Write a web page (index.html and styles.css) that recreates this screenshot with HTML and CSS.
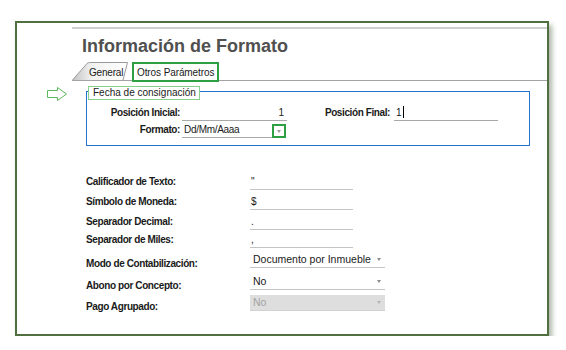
FILE: index.html
```html
<!DOCTYPE html>
<html lang="es">
<head>
<meta charset="utf-8">
<title>Información de Formato</title>
<link rel="stylesheet" href="styles.css">
</head>
<body>
<div class="frame">
  <svg class="arrow" width="21" height="15" viewBox="0 0 21 15"><polygon points="0.5,3.5 10.5,3.5 10.5,0.5 19.5,7 10.5,13.5 10.5,10.5 0.5,10.5" fill="#fff" stroke="#5cba5e" stroke-width="1"/></svg>
  <div class="page">
    <h1 class="title">Información de Formato</h1>
    <div class="tabs">
      <div class="tab tab-general">
        <svg class="tab-shape" width="57" height="18" viewBox="0 0 57 18"><defs><linearGradient id="tg" x1="0" y1="0" x2="1" y2="0"><stop offset="0" stop-color="#c4c4c4"/><stop offset="0.35" stop-color="#f2f2f2"/><stop offset="1" stop-color="#ffffff"/></linearGradient></defs><path d="M0.5 18 L15 1.5 Q16 0.5 17.5 0.5 L55.5 0.5 L51 18" fill="url(#tg)" stroke="#9a9a9a" stroke-width="1"/></svg>
        <span class="tab-text">General</span>
      </div>
      <div class="tab tab-active">Otros Parámetros</div>
    </div>

    <div class="fieldset">
      <div class="legend">Fecha de consignación</div>
      <div class="frow">
        <span class="flabel">Posición Inicial:</span>
        <span class="finput finput-right">1</span>
        <span class="flabel flabel-2">Posición Final:</span>
        <span class="finput finput-2">1<span class="caret"></span></span>
      </div>
      <div class="frow frow-2">
        <span class="flabel">Formato:</span>
        <span class="fselect"><span class="fselect-text">Dd/Mm/Aaaa</span><span class="drop-hl"><span class="tri tri-small"></span></span></span>
      </div>
    </div>

    <div class="form">
      <div class="row">
        <span class="label">Calificador de Texto:</span>
        <span class="input">"</span>
      </div>
      <div class="row row-g4">
        <span class="label">Símbolo de Moneda:</span>
        <span class="input">$</span>
      </div>
      <div class="row row-g4">
        <span class="label">Separador Decimal:</span>
        <span class="input">.</span>
      </div>
      <div class="row row-g2">
        <span class="label">Separador de Miles:</span>
        <span class="input">,</span>
      </div>
      <div class="row row-g4">
        <span class="label label-sel">Modo de Contabilización:</span>
        <span class="select"><span>Documento por Inmueble</span><span class="tri"></span></span>
      </div>
      <div class="row row-g6">
        <span class="label label-sel">Abono por Concepto:</span>
        <span class="select"><span>No</span><span class="tri"></span></span>
      </div>
      <div class="row row-g5">
        <span class="label label-sel">Pago Agrupado:</span>
        <span class="select select-disabled"><span>No</span><span class="tri tri-light"></span></span>
      </div>
    </div>
  </div>
</div>
</body>
</html>
```

FILE: styles.css
```css
* { box-sizing: border-box; }

body {
  margin: 0;
  background: #fff;
  font-family: "Liberation Sans", Arial, sans-serif;
  color: #1a1a1a;
}

.frame {
  position: relative;
  display: flex;
  margin: 21px 0 0 15px;
  width: 534px;
  height: 315px;
  border: 2px solid #51703f;
  box-shadow: 3px 4px 5px rgba(70, 95, 60, 0.45);
  background: #fff;
}

.arrow {
  position: absolute;
  left: 30px;
  top: 64px;
}

.page {
  flex: 1;
  margin: 4px 0 0 55px;
  border-top: 2px solid #cfcfcf;
}

.title {
  margin: 7px 0 0 10px;
  font-size: 18px;
  line-height: 20px;
  font-weight: bold;
  color: #505050;
}

.tabs {
  display: flex;
  align-items: flex-start;
  margin-top: 6px;
  height: 19px;
  border-bottom: 1px solid #a3a3a3;
}

.tab {
  font-size: 10px;
  line-height: 14px;
  color: #1a1a1a;
}

.tab-general {
  position: relative;
  width: 57px;
  height: 18px;
  padding: 4px 0 0 17px;
  letter-spacing: -0.2px;
}

.tab-shape {
  position: absolute;
  left: 0;
  top: 0;
}

.tab-text {
  position: relative;
}

.tab-active {
  position: relative;
  margin-left: 3px;
  width: 87px;
  height: 20px;
  border: 2px solid #2ea043;
  padding: 2px 0 0 3px;
  letter-spacing: -0.1px;
  background: #fff;
}

/* Fieldset */
.fieldset {
  display: flex;
  flex-direction: column;
  margin: 10px 0 0 14px;
  width: 444px;
  border: 1px solid #2173cc;
  padding: 0 0 7px 0;
}

.legend {
  align-self: flex-start;
  margin: -6px 0 0 1px;
  border: 1px solid #86d08e;
  padding: 0 3px 1px 4px;
  font-size: 10px;
  line-height: 11px;
  background: #fff;
  color: #1a1a1a;
}

.frow {
  display: flex;
  margin-top: 6px;
}

.frow-2 {
  margin-top: 2px;
}

.flabel {
  width: 95px;
  padding-right: 2px;
  text-align: right;
  font-size: 10px;
  font-weight: bold;
  line-height: 14px;
  letter-spacing: -0.4px;
}

.flabel-2 {
  width: 107px;
  padding-right: 4px;
}

.finput {
  width: 105px;
  height: 15px;
  border-bottom: 1px solid #a8a8a8;
  font-size: 10px;
  line-height: 14px;
}

.finput-right {
  text-align: right;
  padding-right: 3px;
}

.finput-2 {
  width: 104px;
  padding-left: 2px;
}

.caret {
  display: inline-block;
  width: 1px;
  height: 12px;
  margin-left: 1px;
  background: #000;
  vertical-align: -2px;
}

.fselect {
  display: flex;
  width: 104px;
  height: 15px;
  border-bottom: 1px solid #a8a8a8;
  padding-left: 2px;
  font-size: 10px;
  line-height: 14px;
  letter-spacing: -0.3px;
}

.fselect-text {
  flex: 1;
}

.drop-hl {
  display: flex;
  align-items: center;
  justify-content: center;
  align-self: flex-end;
  width: 14px;
  height: 14px;
  margin-bottom: -1px;
  border: 2px solid #2ea043;
}

.tri {
  width: 0;
  height: 0;
  border-left: 2.5px solid transparent;
  border-right: 2.5px solid transparent;
  border-top: 3px solid #8a8a8a;
}

.tri-small {
  border-top-color: #999;
}

.tri-light {
  border-top-color: #b5b5b5;
}

/* Lower form */
.form {
  margin: 28px 0 0 14px;
}

.row {
  display: flex;
  align-items: flex-end;
}

.row-g2 { margin-top: 2px; }
.row-g4 { margin-top: 4px; }
.row-g5 { margin-top: 5px; }
.row-g6 { margin-top: 6px; }

.label {
  width: 164px;
  padding-bottom: 1px;
  font-size: 10px;
  font-weight: bold;
  line-height: 14px;
  letter-spacing: -0.4px;
}

.label-sel {
  margin-bottom: -4px;
}

.input {
  width: 103px;
  height: 16px;
  border-bottom: 1px solid #c4c4c4;
  padding-left: 1px;
  font-size: 10px;
  line-height: 15px;
}

.select {
  display: flex;
  align-items: center;
  justify-content: space-between;
  width: 135px;
  height: 16px;
  border-bottom: 1px solid #c4c4c4;
  padding: 0 4px 0 3px;
  font-size: 10.5px;
  line-height: 15px;
}

.select-disabled {
  background: #dedede;
  color: #a3a3a3;
  border-bottom-color: #d2d2d2;
}
```
